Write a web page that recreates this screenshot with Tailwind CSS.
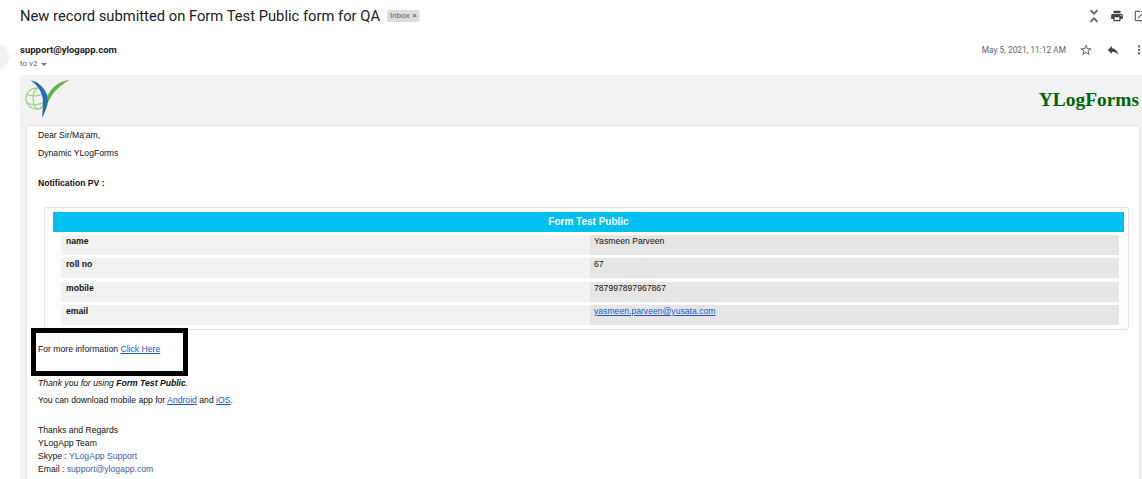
<!DOCTYPE html>
<html lang="en">
<head>
  <meta charset="UTF-8">
  <title>New record submitted on Form Test Public form for QA</title>
  <script src="https://cdn.jsdelivr.net/npm/@tailwindcss/browser@4"></script>
</head>
<body class="bg-white text-black overflow-hidden h-[479px] relative font-['Liberation_Sans',sans-serif]">
  <!-- subject -->
  <header class="h-[32px] pl-[20px] flex items-center relative">
    <h1 class="font-['Roboto',sans-serif] text-[14.75px] leading-[30px] text-[#202124]">New record submitted on Form Test Public form for QA</h1>
    <span class="ml-[7px] mt-[-1px] px-[3px] h-[12px] rounded-[2px] bg-[#dddddd] text-[#666666] text-[8px] leading-[12px] font-['Roboto',sans-serif] flex items-center gap-[3px]">Inbox <span class="text-[#555555]">×</span></span>
    <div class="ml-auto flex items-center gap-[9px] mr-[-5px] text-[#444746]">
      <svg class="w-[14px] h-[14px]" viewBox="0 0 24 24" fill="none" stroke="#5f6368" stroke-width="3"><path d="M6 2l6 6 6-6M6 22l6-6 6 6"/></svg>
      <svg class="w-[14px] h-[14px]" viewBox="0 0 24 24" fill="#444746"><path d="M19 8H5c-1.66 0-3 1.34-3 3v6h4v4h12v-4h4v-6c0-1.66-1.34-3-3-3zm-3 11H8v-5h8v5zm3-7c-.55 0-1-.45-1-1s.45-1 1-1 1 .45 1 1-.45 1-1 1zm-1-9H6v4h12V3z"/></svg>
      <svg class="w-[14px] h-[14px]" viewBox="0 0 24 24" fill="#5f6368"><path d="M19 19H5V5h7V3H5c-1.1 0-2 .9-2 2v14c0 1.1.9 2 2 2h14c1.1 0 2-.9 2-2v-7h-2v7zM14 3v2h3.6l-9.8 9.8 1.4 1.4L19 6.4V10h2V3h-7z"/></svg>
    </div>
  </header>

  <!-- sender -->
  <section class="h-[43px] pl-[20px] pt-[12px] flex relative">
    <div class="absolute left-[-18px] top-[11px] w-[27px] h-[27px] rounded-full bg-[#f1f1f1]"></div>
    <div>
      <div class="font-['Roboto',sans-serif] font-bold text-[9.5px] leading-[12px] text-[#202124]">support@ylogapp.com</div>
      <div class="font-['Roboto',sans-serif] text-[8px] leading-[12px] mt-[2px] text-[#5f6368] flex items-center gap-[4px]">to v2 <span class="w-0 h-0 border-x-[3px] border-x-transparent border-t-[3px] border-t-[#777777]"></span></div>
    </div>
    <div class="ml-auto flex items-start mr-[-4px]">
      <span class="font-['Roboto',sans-serif] text-[8.35px] leading-[12px] text-[#5f6368] mr-[13px]">May 5, 2021, 11:12 AM</span>
      <svg class="w-[14px] h-[14px] mt-[-1px] mr-[13px]" viewBox="0 0 24 24" fill="#5f6368"><path d="M22 9.24l-7.19-.62L12 2 9.19 8.63 2 9.24l5.46 4.73L5.82 21 12 17.27 18.18 21l-1.63-7.03L22 9.24zM12 15.4l-3.76 2.27 1-4.28-3.32-2.88 4.38-.38L12 6.1l1.71 4.04 4.38.38-3.32 2.88 1 4.28L12 15.4z"/></svg>
      <svg class="w-[14px] h-[14px] mt-[-1px] mr-[12px]" viewBox="0 0 24 24" fill="#444746"><path d="M10 9V5l-7 7 7 7v-4.1c5 0 8.5 1.6 11 5.1-1-5-4-10-11-11z"/></svg>
      <svg class="w-[14px] h-[14px] mt-[-1px]" viewBox="0 0 24 24" fill="#5f6368"><path d="M12 8c1.1 0 2-.9 2-2s-.9-2-2-2-2 .9-2 2 .9 2 2 2zm0 2c-1.1 0-2 .9-2 2s.9 2 2 2 2-.9 2-2-.9-2-2-2zm0 6c-1.1 0-2 .9-2 2s.9 2 2 2 2-.9 2-2-.9-2-2-2z"/></svg>
    </div>
  </section>

  <!-- message body -->
  <main class="ml-[20px] bg-[#f2f2f2] h-[404px] pl-[6px] pr-[2px]">
    <div class="h-[50px] flex justify-between relative">
      <svg class="w-[46px] h-[44px] ml-[-2px] mt-[4px]" viewBox="0 0 46 44">
        <g fill="none" stroke="#9ccf7c" stroke-width="1.1">
          <circle cx="12.5" cy="19.5" r="10.5"/>
          <ellipse cx="14.5" cy="19.5" rx="5.5" ry="10.5"/>
          <path d="M2.5 15.5c6 2 13 2 18-2M2.5 24c6 2 13 2 18-1"/>
        </g>
        <path d="M6.7 1C14 3 21 8 24.3 19.3 24 27 21 33 18 39 18.5 32 19.5 26 18.7 19.3 17.5 12 13 6 6.7 1z" fill="#1f6db5"/>
        <path d="M45.3 1C36 2 27 8 23 18L24.5 23C28 14 35 7 45.3 1z" fill="#62b53a"/>
      </svg>
      <div class="font-['Liberation_Serif',serif] font-bold text-[19.4px] leading-[20px] text-[#006400] pt-[15px] mr-[1px]">YLogForms</div>
    </div>

    <div class="bg-white border border-[#f2dede] rounded-[4px] h-[360px] pl-[11px] pr-[10px] text-[8.65px] text-[#111111]">
      <p class="leading-[12px] mt-[3px]">Dear Sir/Ma'am,</p>
      <p class="leading-[12px] mt-[6px]">Dynamic YLogForms</p>
      <p class="leading-[12px] mt-[18px] font-bold">Notification PV :</p>

      <div class="border border-[#f2dede] rounded-[3px] ml-[6px] mt-[18px] h-[123px] pl-[8px] pr-[4px] pt-[4px]">
        <div class="bg-[#00c0ef] h-[20px] text-white font-bold text-[10px] leading-[20px] text-center">Form Test Public</div>
        <div class="ml-[8px] mr-[5px] mt-[3px] grid grid-cols-2">
          <div class="bg-[#f2f2f2] h-[20px] pl-[5px] font-bold leading-[12px]">name</div>
          <div class="bg-[#e5e5e5] h-[20px] pl-[4px] leading-[12px]">Yasmeen Parveen</div>
        </div>
        <div class="ml-[8px] mr-[5px] mt-[3px] grid grid-cols-2">
          <div class="bg-[#f2f2f2] h-[20px] pl-[5px] font-bold leading-[12px]">roll no</div>
          <div class="bg-[#e5e5e5] h-[20px] pl-[4px] leading-[12px]">67</div>
        </div>
        <div class="ml-[8px] mr-[5px] mt-[4px] grid grid-cols-2">
          <div class="bg-[#f2f2f2] h-[20px] pl-[5px] font-bold leading-[12px]">mobile</div>
          <div class="bg-[#e5e5e5] h-[20px] pl-[4px] leading-[12px]">787997897967867</div>
        </div>
        <div class="ml-[8px] mr-[5px] mt-[3px] grid grid-cols-2">
          <div class="bg-[#f2f2f2] h-[20px] pl-[5px] font-bold leading-[12px]">email</div>
          <div class="bg-[#e5e5e5] h-[20px] pl-[4px] leading-[12px]"><a href="#" class="text-[#1a56c4] underline">yasmeen.parveen@yusata.com</a></div>
        </div>
      </div>

      <p class="leading-[12px] mt-[13px]">For more information <a href="#" class="text-[#1a56c4] underline">Click Here</a></p>
      <p class="leading-[12px] mt-[22px] italic">Thank you for using <b>Form Test Public</b>.</p>
      <p class="leading-[12px] mt-[5px]">You can download mobile app for <a href="#" class="text-[#1a56c4] underline">Android</a> and <a href="#" class="text-[#1a56c4] underline">iOS</a>.</p>
      <p class="leading-[13px] mt-[18px]">Thanks and Regards</p>
      <p class="leading-[13px]">YLogApp Team</p>
      <p class="leading-[13px]">Skype : <span class="text-[#3a5ea8]">YLogApp Support</span></p>
      <p class="leading-[13px]">Email : <span class="text-[#3a5ea8]">support@ylogapp.com</span></p>
    </div>
  </main>

  <!-- annotation box drawn on the screenshot -->
  <div class="absolute left-[31px] top-[328px] w-[157px] h-[48px] border-[5px] border-black"></div>
</body>
</html>
